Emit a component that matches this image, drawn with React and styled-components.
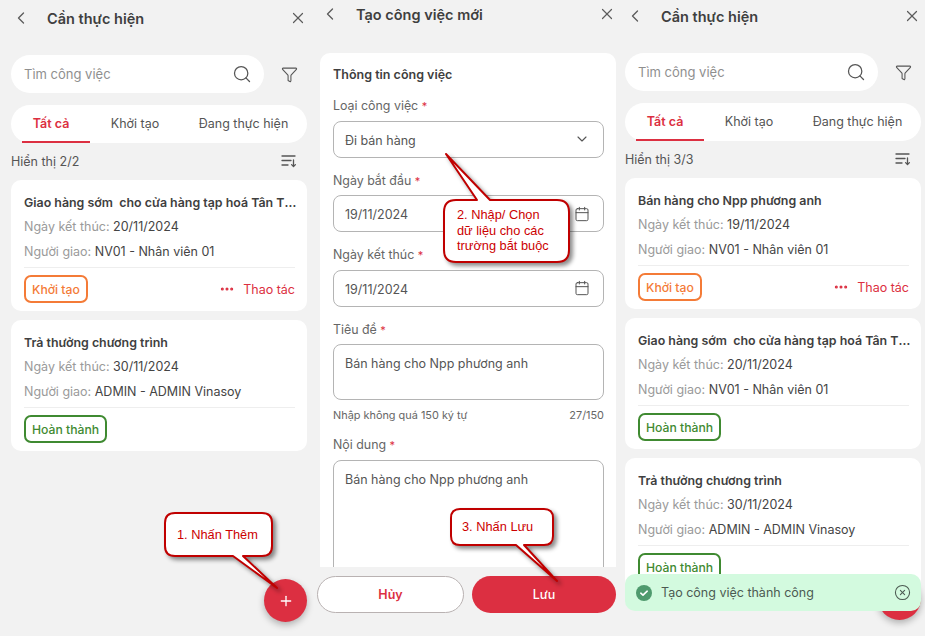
import React from 'react';
import styled, { createGlobalStyle } from 'styled-components';
import { Calendar, ChevronDown, ChevronLeft, CircleX, Ellipsis, Filter, Plus, Search, X } from 'lucide-react';

const RED = '#dc2f41';

const GlobalStyle = createGlobalStyle`
  html, body { margin: 0; padding: 0; background: #f2f2f2; }
  body { font-family: Inter, "Noto Sans", sans-serif; color: #3c3c3c; }
  * { box-sizing: border-box; }
`;

const Page = styled.div`
  position: relative;
  display: grid;
  grid-template-columns: 309px 305px 311px;
  width: 925px;
  height: 636px;
  overflow: hidden;
  background: #f2f2f2;
`;

const Panel = styled.section`
  position: relative;
  height: 636px;
  padding: ${(p) => p.$top}px 0 0 11px;
`;

const Header = styled.header`
  display: flex;
  align-items: center;
  height: 28px;
  width: 296px;
  color: #5c5c5c;
`;

const HeaderTitle = styled.h1`
  flex: 1;
  margin: 0 0 0 16px;
  font-size: 14.5px;
  font-weight: 600;
  color: #3f3f3f;
`;

const SearchRow = styled.div`
  display: flex;
  align-items: center;
  justify-content: space-between;
  width: 287px;
  margin-top: 23px;
  color: #555;
`;

const SearchBox = styled.div`
  display: flex;
  align-items: center;
  justify-content: space-between;
  width: 253px;
  height: 38px;
  padding: 0 12px 0 13px;
  border-radius: 19px;
  background: #fff;
  font-size: 13px;
  color: #8f8f8f;
`;

const Tabs = styled.div`
  display: grid;
  grid-template-columns: 68px 90px 1fr;
  width: 296px;
  height: 38px;
  margin-top: 12px;
  padding-left: 11px;
  border-radius: 19px;
  background: #fff;
`;

const Tab = styled.div`
  display: flex;
  align-items: center;
  justify-content: center;
  padding-right: ${(p) => (p.$active ? 10 : 0)}px;
  font-size: 12.5px;
  font-weight: ${(p) => (p.$active ? 600 : 400)};
  color: ${(p) => (p.$active ? RED : '#555')};
  border-bottom: 2px solid ${(p) => (p.$active ? RED : 'transparent')};
`;

const CountRow = styled.div`
  display: flex;
  align-items: center;
  justify-content: space-between;
  width: 296px;
  height: 20px;
  margin-top: 8px;
  padding-right: 10px;
  font-size: 12.5px;
  color: #555;
`;

const CardList = styled.div`
  display: flex;
  flex-direction: column;
  gap: 9px;
  width: 296px;
  margin-top: 9px;
`;

const Card = styled.article`
  padding: 13px 12px 8px 13px;
  border-radius: 10px;
  background: #fff;
`;

const CardTitle = styled.div`
  height: 18px;
  margin: 1px -2px 1.5px 0;
  overflow: hidden;
  font-size: 12.4px;
  font-weight: 600;
  line-height: 18px;
  white-space: pre;
  text-overflow: ellipsis;
  color: #3f3f3f;
`;

const InfoRow = styled.div`
  height: 25px;
  font-size: 12.5px;
  line-height: 26px;
  color: #444;
`;

const InfoLabel = styled.span`
  color: #9a9a9a;
`;

const CardFooter = styled.div`
  display: flex;
  align-items: center;
  justify-content: space-between;
  margin-top: 3.5px;
  padding-top: 7px;
  border-top: 1px solid #eeeeee;
`;

const Badge = styled.div`
  display: flex;
  align-items: center;
  height: 28px;
  padding: 0 6px;
  border: 2px solid ${(p) => p.$color};
  border-radius: 7px;
  font-size: 12.2px;
  font-weight: 500;
  color: ${(p) => p.$color};
`;

const ActionLink = styled.div`
  display: flex;
  align-items: center;
  gap: 8px;
  font-size: 12.5px;
  color: ${RED};
`;

const Fab = styled.button`
  position: absolute;
  top: ${(p) => p.$top}px;
  left: ${(p) => p.$left}px;
  display: flex;
  align-items: center;
  justify-content: center;
  width: 43px;
  height: 43px;
  padding: 0;
  border: 0;
  border-radius: 50%;
  background: ${RED};
  color: #fff;
  box-shadow: 0 3px 7px rgba(0, 0, 0, 0.28);
`;

const Toast = styled.div`
  position: absolute;
  top: 574px;
  left: 11px;
  display: flex;
  align-items: center;
  width: 296px;
  height: 37px;
  padding: 0 10px 0 11px;
  border-radius: 10px;
  background: #d3fadf;
  font-size: 12.5px;
  color: #4c5a52;
`;

const ToastText = styled.span`
  flex: 1;
  margin-left: 9px;
`;

const FormCard = styled.form`
  width: 296px;
  height: 514px;
  margin-top: 25px;
  padding: 13px 12px 0 13px;
  overflow: hidden;
  border-radius: 10px 10px 0 0;
  background: #fff;
`;

const FormHeading = styled.div`
  height: 18px;
  margin-bottom: 12px;
  font-size: 12.5px;
  font-weight: 600;
  line-height: 18px;
  color: #3f3f3f;
`;

const Field = styled.div`
  margin-bottom: ${(p) => p.$after ?? 13}px;
`;

const FieldLabel = styled.div`
  height: 18px;
  margin-bottom: 6.5px;
  font-size: 12.4px;
  line-height: 20px;
  color: #666;
`;

const Required = styled.span`
  font-size: 11px;
  color: ${RED};
`;

const InputBox = styled.div`
  display: flex;
  align-items: center;
  justify-content: space-between;
  height: 37px;
  padding: 0 13px 0 11px;
  border: 1px solid #b4b4b4;
  border-radius: 8px;
  font-size: 12.5px;
  color: #555;
`;

const InputValue = styled.span`
  padding-top: 2px;
`;

const TextBox = styled.div`
  height: ${(p) => p.$height}px;
  padding: 10px 11px;
  border: 1px solid #b4b4b4;
  border-radius: 8px;
  font-size: 12.5px;
  line-height: 18px;
  color: #555;
`;

const Hint = styled.div`
  display: flex;
  justify-content: space-between;
  height: 18px;
  margin-top: 5px;
  font-size: 10.9px;
  line-height: 20px;
  color: #666;
`;

const FormActions = styled.div`
  display: grid;
  grid-template-columns: 147px 144px;
  gap: 8px;
  margin: 9px 0 0 -3px;
`;

const CancelButton = styled.button`
  height: 37px;
  border: 1px solid #b9b2b2;
  border-radius: 18.5px;
  background: #fff;
  font: 600 12.5px Inter, sans-serif;
  color: ${RED};
`;

const SaveButton = styled.button`
  height: 37px;
  border: 0;
  border-radius: 18.5px;
  background: ${RED};
  font: 500 12.5px Inter, sans-serif;
  color: #fff;
`;

const CalloutArt = styled.svg`
  position: absolute;
  top: 0;
  left: 0;
  pointer-events: none;
  filter: drop-shadow(3px 3px 2px rgba(0, 0, 0, 0.45));
`;

const CalloutText = styled.div`
  position: absolute;
  top: ${(p) => p.$top}px;
  left: ${(p) => p.$left}px;
  font-family: "Liberation Sans", Arial, sans-serif;
  font-size: 12.8px;
  line-height: 15.5px;
  white-space: pre;
  color: #cc0000;
`;

const SortIcon = () => (
  <svg width="16" height="14" viewBox="0 0 16 14" fill="none" stroke="#555" strokeWidth="1.3" strokeLinecap="round">
    <path d="M1 2h13M1 6.5h9M1 11h6M12.5 6v6.5M10.6 10.6l1.9 2 1.9-2" />
  </svg>
);

const CheckBadge = () => (
  <svg width="16" height="16" viewBox="0 0 16 16">
    <circle cx="8" cy="8" r="8" fill="#4f9a6e" />
    <path d="M4.8 8.2l2.2 2 4.2-4" fill="none" stroke="#fff" strokeWidth="1.6" strokeLinecap="round" strokeLinejoin="round" />
  </svg>
);

const PanelHeader = ({ title }) => (
  <Header>
    <ChevronLeft size={20} strokeWidth={1.6} />
    <HeaderTitle>{title}</HeaderTitle>
    <X size={18} strokeWidth={1.6} />
  </Header>
);

const TaskCard = ({ task }) => (
  <Card>
    <CardTitle>{task.title}</CardTitle>
    <InfoRow><InfoLabel>Ngày kết thúc: </InfoLabel>{task.end}</InfoRow>
    <InfoRow><InfoLabel>Người giao: </InfoLabel>{task.owner}</InfoRow>
    <CardFooter>
      <Badge $color={task.done ? '#3f8a31' : '#f47b37'}>{task.done ? 'Hoàn thành' : 'Khởi tạo'}</Badge>
      {!task.done && (
        <ActionLink>
          <Ellipsis size={16} strokeWidth={2.6} />
          Thao tác
        </ActionLink>
      )}
    </CardFooter>
  </Card>
);

const ListPanel = ({ top, count, tasks, children }) => (
  <Panel $top={top}>
    <PanelHeader title="Cần thực hiện" />
    <SearchRow>
      <SearchBox>
        Tìm công việc
        <Search size={20} strokeWidth={1.5} color="#555" />
      </SearchBox>
      <Filter size={17} strokeWidth={1.5} />
    </SearchRow>
    <Tabs>
      <Tab $active>Tất cả</Tab>
      <Tab>Khởi tạo</Tab>
      <Tab>Đang thực hiện</Tab>
    </Tabs>
    <CountRow>
      Hiển thị {count}
      <SortIcon />
    </CountRow>
    <CardList>
      {tasks.map((task) => <TaskCard key={task.title} task={task} />)}
    </CardList>
    {children}
  </Panel>
);

const sell = { title: 'Bán hàng cho Npp phương anh', end: '19/11/2024', owner: 'NV01 - Nhân viên 01' };
const ship = { title: 'Giao hàng sớm  cho cửa hàng tạp hoá Tân Tiến', end: '20/11/2024', owner: 'NV01 - Nhân viên 01' };
const reward = { title: 'Trả thưởng chương trình', end: '30/11/2024', owner: 'ADMIN - ADMIN Vinasoy', done: true };

const BUBBLES = [
  'M175 513H262Q272 513 272 523V546Q272 556 262 556H243L277 588L233 556H175Q165 556 165 546V523Q165 513 175 513Z',
  'M456 200H477L446 154L490 200H557Q569 200 569 212V250Q569 262 557 262H456Q444 262 444 250V212Q444 200 456 200Z',
  'M460 509H544Q553 509 553 518V536Q553 545 544 545H524L557 581L516 545H460Q451 545 451 536V518Q451 509 460 509Z',
];

export default function App() {
  return (
    <Page>
      <GlobalStyle />
      <ListPanel top={4} count="2/2" tasks={[ship, reward]}>
        <Fab $left={264} $top={579}><Plus size={16} strokeWidth={2} /></Fab>
      </ListPanel>

      <Panel $top={0}>
        <PanelHeader title="Tạo công việc mới" />
        <FormCard>
          <FormHeading>Thông tin công việc</FormHeading>
          <Field>
            <FieldLabel>Loại công việc <Required>*</Required></FieldLabel>
            <InputBox><InputValue>Đi bán hàng</InputValue><ChevronDown size={16} strokeWidth={1.7} /></InputBox>
          </Field>
          <Field>
            <FieldLabel>Ngày bắt đầu <Required>*</Required></FieldLabel>
            <InputBox><InputValue>19/11/2024</InputValue><Calendar size={16} strokeWidth={1.5} /></InputBox>
          </Field>
          <Field>
            <FieldLabel>Ngày kết thúc <Required>*</Required></FieldLabel>
            <InputBox><InputValue>19/11/2024</InputValue><Calendar size={16} strokeWidth={1.5} /></InputBox>
          </Field>
          <Field $after={12}>
            <FieldLabel>Tiêu đề <Required>*</Required></FieldLabel>
            <TextBox $height={56}>Bán hàng cho Npp phương anh</TextBox>
            <Hint><span>Nhập không quá 150 ký tự</span><span>27/150</span></Hint>
          </Field>
          <Field>
            <FieldLabel>Nội dung <Required>*</Required></FieldLabel>
            <TextBox $height={130}>Bán hàng cho Npp phương anh</TextBox>
          </Field>
        </FormCard>
        <FormActions>
          <CancelButton type="button">Hủy</CancelButton>
          <SaveButton type="button">Lưu</SaveButton>
        </FormActions>
      </Panel>

      <ListPanel top={2} count="3/3" tasks={[sell, { ...ship, done: true }, reward]}>
        <Fab $left={264} $top={577}><Plus size={16} strokeWidth={2} /></Fab>
        <Toast>
          <CheckBadge />
          <ToastText>Tạo công việc thành công</ToastText>
          <CircleX size={17} strokeWidth={1.5} color="#4c5a52" />
        </Toast>
      </ListPanel>

      <CalloutArt width="925" height="636" viewBox="0 0 925 636">
        {BUBBLES.map((d) => <path key={d} d={d} fill="#fff" stroke="#c00000" strokeWidth="2" strokeLinejoin="round" />)}
      </CalloutArt>
      <CalloutText $left={177} $top={527}>1. Nhấn Thêm</CalloutText>
      <CalloutText $left={457} $top={207}>{'2. Nhập/ Chọn\ndữ liệu cho các\ntrường bắt buộc'}</CalloutText>
      <CalloutText $left={462} $top={519}>3. Nhấn Lưu</CalloutText>
    </Page>
  );
}
